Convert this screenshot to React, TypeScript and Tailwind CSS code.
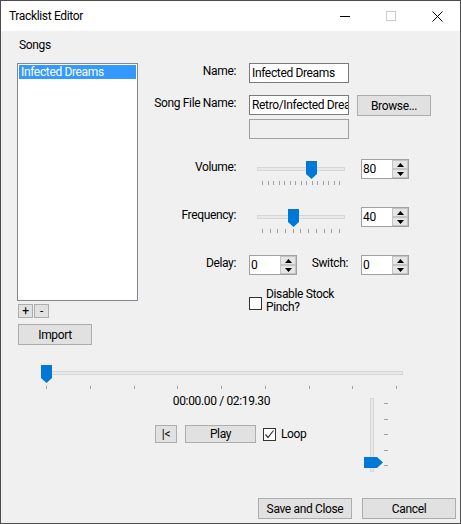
import type { ReactNode } from 'react'

const FONT = "font-['Roboto','Liberation_Sans',sans-serif]"

function Btn({ children, className }: { children: ReactNode; className: string }) {
  return (
    <div className={'flex items-center justify-center border border-[#adadad] bg-[#e1e1e1] text-black ' + className}>
      {children}
    </div>
  )
}

function TextBox({ value, disabled }: { value?: string; disabled?: boolean }) {
  return (
    <div
      className={
        'h-[20px] w-[100px] overflow-hidden whitespace-nowrap border pl-[2px] leading-[18px] ' +
        (disabled ? 'border-[#a0a0a0] bg-[#f0f0f0]' : 'border-[#7a7a7a] bg-white')
      }
    >
      {value}
    </div>
  )
}

function Arrow({ up }: { up?: boolean }) {
  return (
    <svg width="7" height="4" viewBox="0 0 7 4">
      <path d={up ? 'M0 4L3.5 0L7 4Z' : 'M0 0L7 0L3.5 4Z'} fill="#000" />
    </svg>
  )
}

function Numeric({ value }: { value: string }) {
  return (
    <div className="flex h-[20px] w-[48px] border border-[#a0a0a0] bg-white">
      <div className="flex-1 pl-[1px] leading-[18px]">{value}</div>
      <div className="flex w-[16px] flex-col">
        <div className="flex h-[9px] items-center justify-center border border-[#c4c4c4] bg-[#e5e5e5]">
          <Arrow up />
        </div>
        <div className="flex h-[9px] items-center justify-center border border-[#c4c4c4] bg-[#e5e5e5]">
          <Arrow />
        </div>
      </div>
    </div>
  )
}

function HThumb() {
  return (
    <svg width="11" height="18" viewBox="0 0 11 18">
      <path d="M0 0H11V13L5.5 18L0 13Z" fill="#0078d7" />
    </svg>
  )
}

function HSlider({ thumbClass, ticks }: { thumbClass: string; ticks: number }) {
  return (
    <div className="relative mt-[2px] h-[24px] w-[88px]">
      <div className="absolute left-0 right-0 top-[6px] h-[4px] border border-[#d6d6d6] bg-[#e7eaea]" />
      <div className="absolute left-[5px] top-[20px] flex h-[4px] w-[78px] justify-between">
        {Array.from({ length: ticks }).map((_, i) => (
          <div key={i} className="h-full w-px bg-[#a0a0a0]" />
        ))}
      </div>
      <div className={'absolute top-0 ' + thumbClass}>
        <HThumb />
      </div>
    </div>
  )
}

function CheckBox({ checked }: { checked?: boolean }) {
  return (
    <div className="flex h-[13px] w-[13px] shrink-0 items-center justify-center border border-[#333] bg-white">
      {checked && (
        <svg width="11" height="11" viewBox="0 0 11 11">
          <path d="M1.5 5.5L4 8.5L9.5 1.5" fill="none" stroke="#333" strokeWidth="1.2" />
        </svg>
      )}
    </div>
  )
}

function Label({ children, className }: { children: ReactNode; className: string }) {
  return <div className={'text-right leading-[16px] ' + className}>{children}</div>
}

export default function App() {
  return (
    <div
      className={
        'flex h-[524px] w-[461px] flex-col border border-[#4d4d4d] bg-[#f0f0f0] text-[12px] tracking-[-0.35px] text-black ' +
        FONT
      }
    >
      {/* title bar */}
      <div className="flex h-[30px] shrink-0 items-center bg-white">
        <div className="flex-1 pl-[8px]">Tracklist Editor</div>
        <div className="flex h-full w-[46px] items-center justify-center">
          <div className="h-px w-[10px] bg-black" />
        </div>
        <div className="flex h-full w-[46px] items-center justify-center">
          <div className="h-[10px] w-[10px] border border-[#cccccc]" />
        </div>
        <div className="flex h-full w-[46px] items-center justify-center">
          <svg width="11" height="11" viewBox="0 0 11 11">
            <path d="M0.5 0.5L10.5 10.5M10.5 0.5L0.5 10.5" stroke="#000" strokeWidth="1" />
          </svg>
        </div>
      </div>

      {/* top section */}
      <div className="flex">
        <div className="ml-[16px] flex w-[121px] flex-col">
          <div className="mt-[6px] pl-[2px] leading-[16px]">Songs</div>
          <div className="mt-[10px] h-[238px] border border-[#828790] bg-white p-px">
            <div className="h-[14px] bg-[#3399ff] pl-[2px] leading-[14px] text-white">Infected Dreams</div>
          </div>
          <div className="ml-px mt-[3px] flex gap-px">
            <Btn className="h-[14px] w-[15px] leading-none">+</Btn>
            <Btn className="h-[14px] w-[15px] leading-none">-</Btn>
          </div>
          <Btn className="ml-px mt-[6px] h-[21px] w-[74px]">Import</Btn>
        </div>

        <div className="flex flex-col pt-[32px]">
          <div className="flex h-[20px] items-start">
            <Label className="w-[98px]">Name:</Label>
            <div className="ml-[13px]">
              <TextBox value="Infected Dreams" />
            </div>
          </div>
          <div className="mt-[12px] flex h-[21px] items-start">
            <Label className="w-[98px]">Song File Name:</Label>
            <div className="ml-[13px]">
              <TextBox value="Retro/Infected Drea" />
            </div>
            <Btn className="ml-[8px] h-[21px] w-[74px]">Browse...</Btn>
          </div>
          <div className="ml-[111px] mt-[3px]">
            <TextBox disabled />
          </div>
          <div className="mt-[20px] flex h-[20px] items-start">
            <Label className="w-[98px]">Volume:</Label>
            <div className="ml-[21px]">
              <HSlider thumbClass="left-[49px]" ticks={15} />
            </div>
            <div className="ml-[16px]">
              <Numeric value="80" />
            </div>
          </div>
          <div className="mt-[28px] flex h-[20px] items-start">
            <Label className="w-[98px]">Frequency:</Label>
            <div className="ml-[21px]">
              <HSlider thumbClass="left-[31px]" ticks={11} />
            </div>
            <div className="ml-[16px]">
              <Numeric value="40" />
            </div>
          </div>
          <div className="mt-[28px] flex h-[20px] items-start">
            <Label className="w-[98px]">Delay:</Label>
            <div className="ml-[13px]">
              <Numeric value="0" />
            </div>
            <Label className="w-[51px]">Switch:</Label>
            <div className="ml-[13px]">
              <Numeric value="0" />
            </div>
          </div>
          <div className="ml-[111px] mt-[13px] flex items-start">
            <div className="mt-[9px]">
              <CheckBox />
            </div>
            <div className="ml-[4px] leading-[13px]">
              <div>Disable Stock</div>
              <div>Pinch?</div>
            </div>
          </div>
        </div>
      </div>

      {/* seek slider */}
      <div className="relative ml-[40px] mt-[20px] h-[24px] w-[362px] shrink-0">
        <div className="absolute left-0 right-0 top-[6px] h-[4px] border border-[#d6d6d6] bg-[#e7eaea]" />
        <div className="absolute left-[5px] top-[21px] flex h-[3px] w-[351px] justify-between">
          {Array.from({ length: 9 }).map((_, i) => (
            <div key={i} className="h-full w-px bg-[#a0a0a0]" />
          ))}
        </div>
        <div className="absolute left-0 top-0">
          <HThumb />
        </div>
      </div>

      {/* playback */}
      <div className="flex">
        <div className="flex w-[363px] flex-col">
          <div className="ml-[130px] mt-[4px] w-[181px] text-center leading-[16px]">00:00.00 / 02:19.30</div>
          <div className="mt-[16px] flex items-center">
            <Btn className="ml-[154px] h-[18px] w-[22px]">|&lt;</Btn>
            <Btn className="ml-[8px] h-[18px] w-[71px]">Play</Btn>
            <div className="ml-[7px]">
              <CheckBox checked />
            </div>
            <div className="ml-[5px] leading-[16px]">Loop</div>
          </div>
        </div>
        <div className="relative mt-[9px] h-[74px] w-[24px]">
          <div className="absolute bottom-0 left-[6px] top-0 w-[4px] border border-[#d6d6d6] bg-[#e7eaea]" />
          <div className="absolute left-[20px] top-[5px] h-px w-[4px] bg-[#a0a0a0]" />
          <div className="absolute left-[20px] top-[21px] h-px w-[4px] bg-[#a0a0a0]" />
          <div className="absolute left-[20px] top-[36px] h-px w-[4px] bg-[#a0a0a0]" />
          <div className="absolute left-[20px] top-[52px] h-px w-[4px] bg-[#a0a0a0]" />
          <div className="absolute left-[20px] top-[67px] h-px w-[4px] bg-[#a0a0a0]" />
          <svg className="absolute left-0 top-[59px]" width="19" height="11" viewBox="0 0 19 11">
            <path d="M0 0H13L19 5.5L13 11H0Z" fill="#0078d7" />
          </svg>
        </div>
      </div>

      {/* footer */}
      <div className="mt-auto flex justify-end gap-[10px] pb-[4px] pr-[4px]">
        <Btn className="h-[21px] w-[94px]">Save and Close</Btn>
        <Btn className="h-[21px] w-[94px]">Cancel</Btn>
      </div>
    </div>
  )
}
